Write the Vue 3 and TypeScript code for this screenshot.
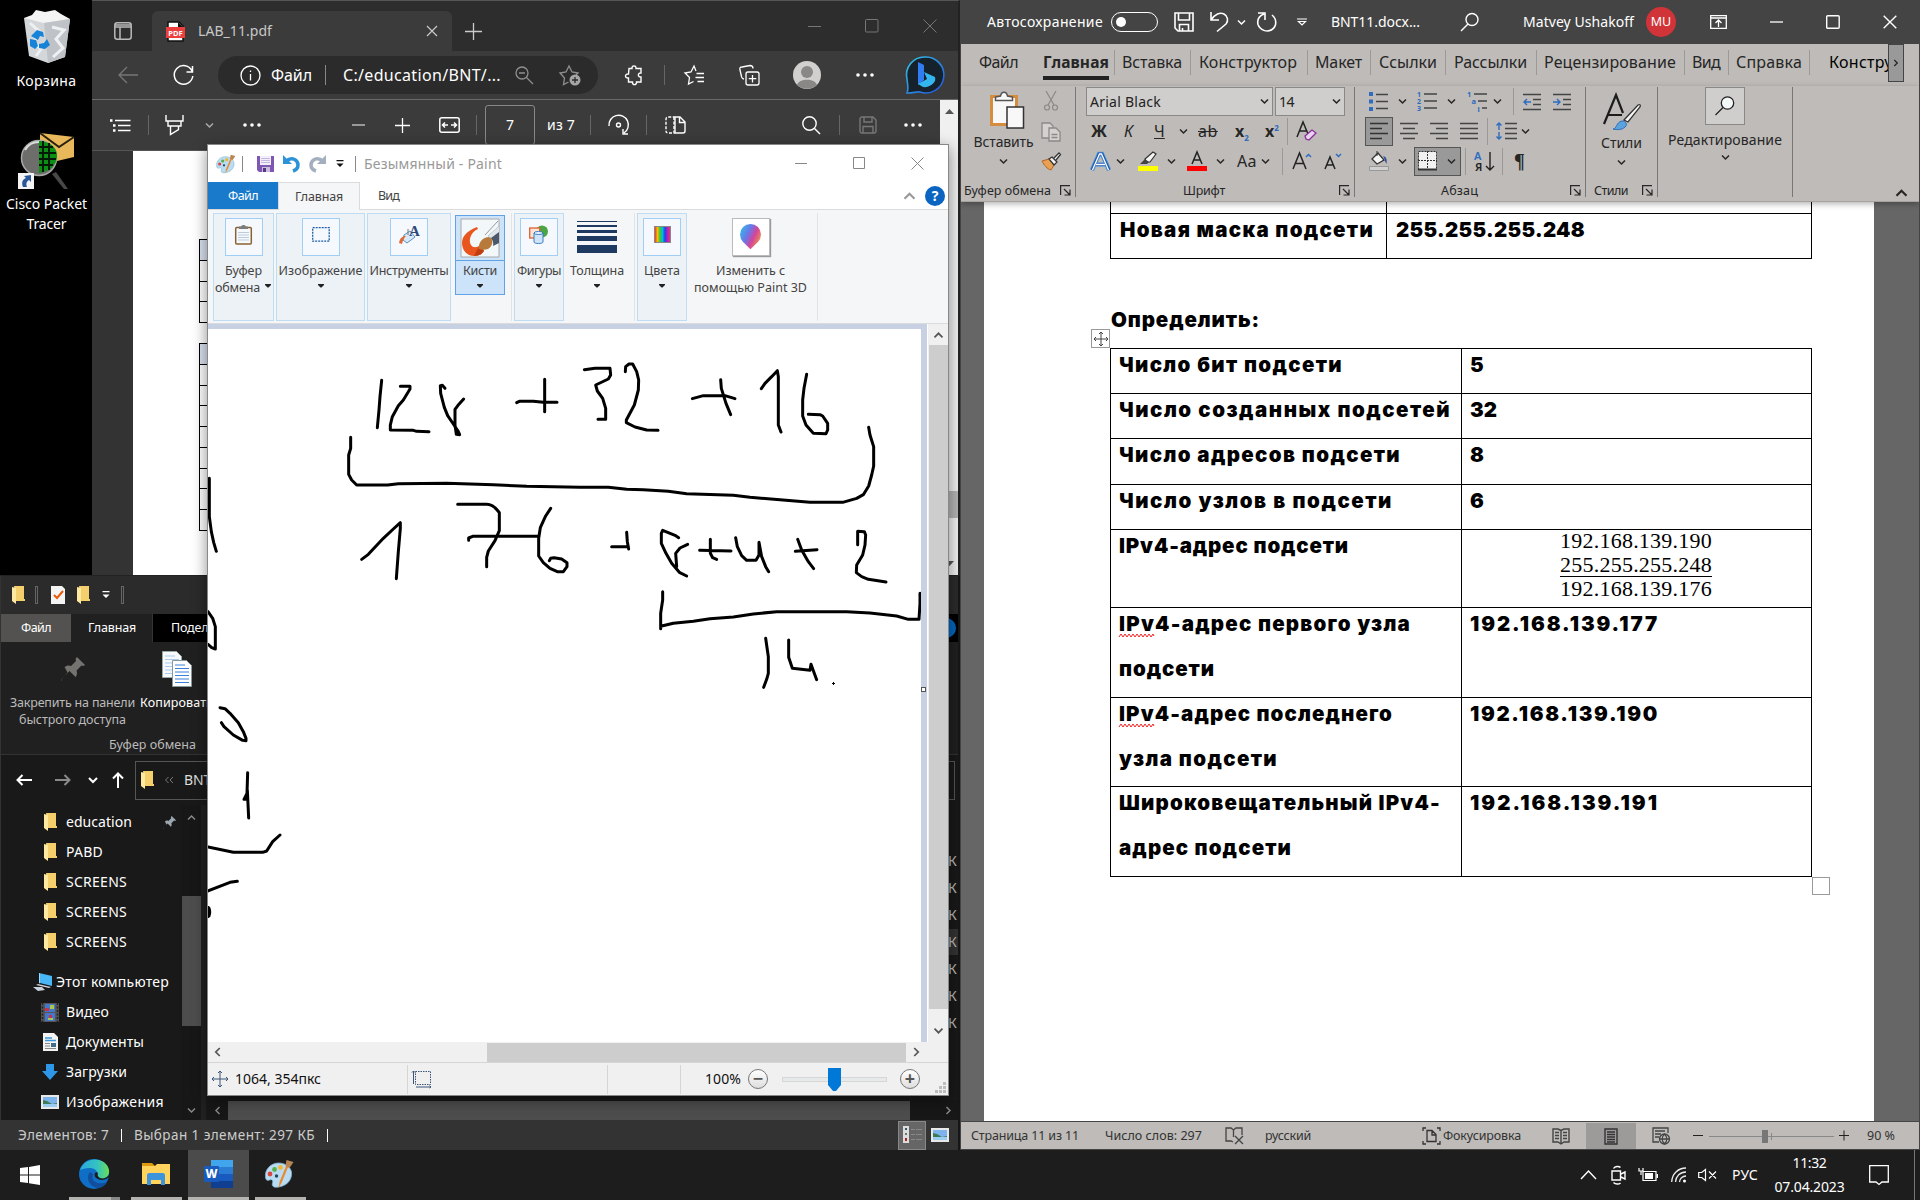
<script setup lang="ts">
import { h, type Directive, type FunctionalComponent } from 'vue'

// Spreads a label over a fixed pixel width by adjusting its letter spacing.
const vFit: Directive<HTMLElement, number> = {
  mounted(el, { value }) {
    const natural = el.getBoundingClientRect().width
    const count = (el.textContent ?? '').length
    if (count > 0) el.style.letterSpacing = `${(value - natural) / count}px`
  },
}

const stroke = { fill: 'none', stroke: 'currentColor' }
const Chev: FunctionalComponent = () =>
  h('svg', { width: 9, height: 7, viewBox: '0 0 9 7', ...stroke, 'stroke-width': 1.5 }, [h('path', { d: 'M1 1.5 4.5 5 8 1.5' })])
const Launcher: FunctionalComponent = () =>
  h('svg', { width: 11, height: 11, viewBox: '0 0 11 11', ...stroke, 'stroke-width': 1.2 }, [
    h('path', { d: 'M.6 10V.6H10M4 4l5.5 5.5M10 4.5V10H4.5' }),
  ])
const Caret: FunctionalComponent = () =>
  h('svg', { width: 8, height: 4, viewBox: '0 0 8 4', fill: 'currentColor' }, [h('path', { d: 'M1 0h6v1L4.5 3.5h-1L1 1z' })])
const QatArrow: FunctionalComponent = () =>
  h('svg', { width: 8, height: 8, viewBox: '0 0 8 8', fill: 'currentColor' }, [h('path', { d: 'M.5 0h7v1.3h-7zM.5 3.5h7L4 7z' })])
const Folder: FunctionalComponent = () =>
  h('svg', { width: 13, height: 18, viewBox: '0 0 13 18' }, [
    h('path', { fill: '#f5cf6c', d: 'M2 0h10v13h1v2H4z' }),
    h('path', { fill: '#ffe9a2', d: 'M0 1l4 1v16l-4-3z' }),
  ])
const Dots: FunctionalComponent = () =>
  h('svg', { width: 18, height: 4, viewBox: '0 0 18 4', fill: 'currentColor' }, [2, 9, 16].map((cx) => h('circle', { cx, cy: 2, r: 1.8 })))
const Pin: FunctionalComponent = () =>
  h('svg', { viewBox: '0 0 24 24', fill: 'currentColor' }, [
    h('path', { d: 'M16 0l8 8-1.5 1-2-.5-5 5c1 2.500.5 5-1 6.500L8.500 14 1.500 21 0 24l-.0-1L6.500 15.500 3.500 10c2-1.500 4-2 6.500-1l5-5-.5-2z' }),
  ])
const Photo: FunctionalComponent = () =>
  h('svg', { width: 18, height: 14, viewBox: '0 0 18 14' }, [
    h('rect', { width: 18, height: 14, fill: '#e8e8e8' }),
    h('rect', { x: 2, y: 2, width: 14, height: 10, fill: '#7db4ee' }),
    h('path', { d: 'M2 5l4 1 5 3 5-1v1H2z', fill: '#3f7a58' }),
    h('path', { d: 'M2 9h14v3H2z', fill: '#9ccdf0' }),
  ])
const Palette: FunctionalComponent = () =>
  h('svg', { viewBox: '0 0 30 30' }, [
    h('path', { d: 'M14 4C6 4 0 11 1 18c0 3 2 4 4 3s4 0 3 3 1 5 6 4c8-1 14-7 13-15C26 8 21 4 14 4z', fill: '#b9dcf2', stroke: '#7fb0cf', 'stroke-width': 0.8 }),
    h('circle', { cx: 5.5, cy: 15, r: 2.4, fill: '#d9473e' }),
    h('circle', { cx: 10, cy: 10.5, r: 2.4, fill: '#58b04c' }),
    h('circle', { cx: 16, cy: 8.5, r: 2.4, fill: '#f2b733' }),
    h('circle', { cx: 12, cy: 17, r: 1.7, fill: '#24465c' }),
    h('path', { d: 'M24 7L17 24l-3 5 1-6 7-17z', fill: '#e88a2f' }),
    h('path', { d: 'M22 1l7 2-4 6-4-2z', fill: '#b98553' }),
  ])

interface WordTab { text: string; cell: number; pad: number; fit: number; cls?: string }
const wordTabs: WordTab[] = [
  { text: 'Файл', cell: 64, pad: 0, fit: 39, cls: 'plain' },
  { text: 'Главная', cell: 71, pad: 0, fit: 66, cls: 'plain active' },
  { text: 'Вставка', cell: 76, pad: 7, fit: 60 },
  { text: 'Конструктор', cell: 117, pad: 8, fit: 98 },
  { text: 'Макет', cell: 63, pad: 7, fit: 47 },
  { text: 'Ссылки', cell: 75, pad: 8, fit: 58 },
  { text: 'Рассылки', cell: 91, pad: 8, fit: 73 },
  { text: 'Рецензирование', cell: 148, pad: 7, fit: 132 },
  { text: 'Вид', cell: 44, pad: 7, fit: 28 },
  { text: 'Справка', cell: 81, pad: 7, fit: 66 },
  { text: 'Конструктор', cell: 79, pad: 19, fit: 100, cls: 'last' },
]

interface Line { text: string; fit: number; wavy?: boolean }
interface DocRow { height: number; left: Line[]; right?: Line }
const docRows: DocRow[] = [
  { height: 45, left: [{ text: 'Число бит подсети', fit: 224 }], right: { text: '5', fit: 13 } },
  { height: 45, left: [{ text: 'Число созданных подсетей', fit: 332 }], right: { text: '32', fit: 27 } },
  { height: 46, left: [{ text: 'Число адресов подсети', fit: 282 }], right: { text: '8', fit: 13 } },
  { height: 45, left: [{ text: 'Число узлов в подсети', fit: 274 }], right: { text: '6', fit: 13 } },
  { height: 78, left: [{ text: 'IPv4-адрес подсети', fit: 230 }] },
  { height: 90, left: [{ text: 'IPv4-адрес первого узла', fit: 292, wavy: true }, { text: 'подсети', fit: 96 }], right: { text: '192.168.139.177', fit: 189 } },
  { height: 89, left: [{ text: 'IPv4-адрес последнего', fit: 274, wavy: true }, { text: 'узла подсети', fit: 159 }], right: { text: '192.168.139.190', fit: 189 } },
  { height: 90, left: [{ text: 'Широковещательный IPv4-', fit: 322 }, { text: 'адрес подсети', fit: 173 }], right: { text: '192.168.139.191', fit: 189 } },
]

const quickAccess = [
  { text: 'education', fit: 66, pinned: true },
  { text: 'PABD', fit: 37 },
  { text: 'SCREENS', fit: 61 },
  { text: 'SCREENS', fit: 61 },
  { text: 'SCREENS', fit: 61 },
]

// Pen strokes, grouped by the corner they are measured from, in thirds of a pixel.
const ink = [
  {
    x: 200, y: 320,
    strokes: [
      'M545 181 540 230 537 270 532 323',
      'M601 199H630V207L610 240 595 257 577 290 571 315V330L640 331 650 334 687 335',
      'M735 205 727 196 721 197 722 220 733 262 743 287 760 312 775 335 779 344 769 343 765 315V268L774 256 791 237',
      'M950 248 958 244H1000L1030 247H1071M1034 178V275',
      'M452 352V385L446 405V463L455 480 470 495H563L595 491 740 490 880 494 980 499 1140 502 1225 502 1280 508 1330 509 1405 514 1460 521 1600 526 1650 532 1740 539 1830 547H1928L1970 535 1990 524 2006 498 2015 465 2021 438V380L2010 345 2006 322',
      'M485 718 505 703 550 655 580 627 601 608V625L595 695 589 776',
      'M773 553H860Q880 553 898 578V632L885 662 865 693 860 712V740M806 661V654L818 649H1016',
      'M1052 565 1037 588 1021 623 1016 655V708L1030 728 1050 745 1072 755H1090L1101 740V728L1085 717 1062 713 1052 715 1048 722',
      'M28 475V590L34 635 41 667 49 694',
      'M24 875 38 895 46 920V987L35 983 24 973',
    ],
  },
  {
    x: 580, y: 320,
    strokes: [
      'M13 149 45 145H90L92 165 85 177 47 195 52 213 68 235 77 265V298H54',
      'M136 155 137 140 147 132H158L170 155 176 180 175 210 163 255 139 300V308L165 321 200 330 234 331',
      'M337 236 370 227H435L465 236M422 179 424 205 438 250 452 284',
      'M544 206 555 190 575 170 592 152 595 170V315L603 336',
      'M680 163 672 205 668 240V288L678 315 700 340 738 341 743 330V310L728 288 720 284 685 283',
      'M95 680H145M140 637 142 665 146 687',
      'M296 653 285 646 248 631 244 640V670L258 700 275 730 298 757 320 768M290 740 287 700 300 684 323 673',
      'M359 691 453 693M391 658V700L398 713 410 718',
      'M467 653 472 680 485 707 500 721H528L537 705V667L545 710 557 740 566 755',
      'M646 694 711 689M653 658 665 690 685 725 701 746',
      'M833 674V634L853 635 857 645 855 675 848 705 830 735 829 758 845 770 865 778 918 786',
      'M248 815V840L242 880V926M242 919 280 910 340 904 390 896 460 891 520 882 590 875H800L870 879 950 888 985 898H1017L1020 850V820',
      'M557 955 565 1010V1060L560 1078 551 1102M626 960V1012L637 1045 690 1051 693 1033 710 1079',
    ],
  },
  {
    x: 0, y: 560,
    strokes: [
      'M660 443 675 446 690 460 715 488 730 515 738 535V542L728 541 700 525 672 500 664 488',
      'M743 638 741 700 732 718H741M742 690 746 774',
      'M624 861 700 877H788L800 873 818 845 840 825',
      'M620 994 690 967 712 964',
    ],
  },
]
const sheetLines = [239, 260, 281, 301, 322, 343, 364, 385, 405, 426, 447, 468, 488, 509, 530]
</script>

<template>
  <div class="desktop">
    <!-- Desktop shortcuts -->
    <div class="shortcuts">
      <div class="shortcut">
        <svg width="50" height="56" viewBox="0 0 50 56">
          <path d="M2 9l46 1-5 38-17 6-19-7z" fill="#d4d7da" />
          <path d="M2 9l20 5 26-4-9-5-6-4-10 2-9-2-4 5z" fill="#f4f4f4" />
          <path d="M22 14l26-4-5 38-17 6z" fill="#bfc3c7" />
          <path d="M30 18l12 3-8 9 7 9-10 9M8 14l10 9-7 10 8 7-5 7" stroke="#eef0f2" stroke-width="3" fill="none" />
          <path d="M9 27l6-6 6 2 1 5-4-1-2 4zM8 30l6 1 2 6-3 3-5-3zM17 35l5-1 3-4 3 6-5 4-6-1z" fill="#1683d8" />
        </svg>
        <span v-fit="60" class="sc-label bin">Корзина</span>
      </div>
      <div class="shortcut second">
        <svg width="58" height="60" viewBox="0 0 58 60">
          <path d="M22 1l34 4v20l-34 8z" fill="#e8b85a" />
          <path d="M22 1l19 14L56 5" stroke="#2a2110" stroke-width="2" fill="none" />
          <circle cx="21" cy="26" r="17.500" fill="#6d6d6b" stroke="#a7a7a5" stroke-width="1.500" />
          <path d="M21 9c12 0 19 8 18 16s-6 14-18 16z" fill="#0b8f14" />
          <path d="M25 9v31M31 11v27M21 15h14M21 21h17M21 27h17M21 33h14" stroke="#031b05" stroke-width="2" />
          <path d="M7 18c4-7 10-8 14-8" stroke="#ddd" stroke-width="2" fill="none" />
          <path d="M34 42l4-2 12 17h-4z" fill="#484848" />
          <rect x="0" y="41" width="16" height="16" fill="#f4f4f4" />
          <path d="M5 55c-2-5 0-8 3-9l-2-2 7-1v7l-2-2c-3 2-3 4-2 7z" fill="#2b579a" />
        </svg>
        <span v-fit="81" class="sc-label first">Cisco Packet</span>
        <span v-fit="40" class="sc-label">Tracer</span>
      </div>
    </div>

    <!-- Browser -->
    <section class="edge">
      <header class="row e-tabs">
        <svg width="18" height="18" viewBox="0 0 18 18" fill="none" stroke="#b9b9b9" stroke-width="1.500"><rect x=".8" y=".8" width="16.400" height="16.400" rx="2.500" /><path d="M1 3h16M1 5h16M6 5v12" /></svg>
        <div class="row e-tab">
          <svg width="19" height="21" viewBox="0 0 19 21"><path d="M2 1h11l4 4v15H2z" fill="#fff" stroke="#111" stroke-width="1.500" /><path d="M12 1l5 5h-5z" fill="#111" /><rect y="6" width="19" height="11" fill="#ee3f3f" /><text x="9.500" y="14.500" font-size="7.500" font-weight="700" fill="#fff" text-anchor="middle">PDF</text></svg>
          <span v-fit="74">LAB_11.pdf</span>
          <svg width="12" height="12" viewBox="0 0 12 12" fill="none" stroke="#c9c9c9" stroke-width="1.200"><path d="M1 1l10 10M11 1L1 11" /></svg>
        </div>
        <svg class="newtab" width="17" height="17" viewBox="0 0 17 17" fill="none" stroke="#ccc" stroke-width="1.300"><path d="M8.500 0v17M0 8.500h17" /></svg>
        <svg width="14" height="14" viewBox="0 0 14 14" fill="none" stroke="#777"><path d="M0 7.500h13" /></svg>
        <svg width="14" height="14" viewBox="0 0 14 14" fill="none" stroke="#777"><rect x=".5" y=".5" width="12.500" height="12.500" rx="1" /></svg>
        <svg width="14" height="14" viewBox="0 0 14 14" fill="none" stroke="#777"><path d="M.5.5l13 13M13.500.5l-13 13" /></svg>
      </header>
      <div class="row e-addr">
        <svg width="20" height="18" viewBox="0 0 20 18" fill="none" stroke="#777" stroke-width="1.300"><path d="M20 9H1M9 1L1 9l8 8" /></svg>
        <svg width="21" height="21" viewBox="0 0 21 21" fill="none" stroke="#fff" stroke-width="1.500"><path d="M19 6A9.300 9.300 0 1 0 19.800 11M19.500 1v6h-6" /></svg>
        <div class="row e-pill">
          <svg width="21" height="21" viewBox="0 0 21 21" fill="none" stroke="#fff" stroke-width="1.300"><circle cx="10.500" cy="10.500" r="9.500" /><path d="M10.500 9v6.500M10.500 5.500v1.500" /></svg>
          <span v-fit="41">Файл</span>
          <i class="bar" />
          <span v-fit="158">C:/education/BNT/...</span>
          <svg width="19" height="19" viewBox="0 0 19 19" fill="none" stroke="#8f8f8f" stroke-width="1.300"><circle cx="7" cy="7" r="6" /><path d="M11.500 11.500L18 18M4 7h6" /></svg>
          <svg width="22" height="22" viewBox="0 0 22 22" fill="none" stroke="#8f8f8f" stroke-width="1.300"><path d="M9.500 18l-5 2.500 1-6.500L1 9l6-1 3-6 3 6 6 1-2 2" /><circle cx="16" cy="16" r="5.500" fill="#a5a5a5" stroke="none" /><path d="M16 13v6M13 16h6" stroke="#2b2b2b" /></svg>
        </div>
        <svg width="20" height="21" viewBox="0 0 20 21" fill="none" stroke="#fff" stroke-width="1.400"><path d="M5 3.500h3c-.5-3.500 4.500-3.500 4 0h5v4.500c-3.500-.5-3.500 4.500 0 4v5h-4.500c.5 3.500-4.500 3.500-4 0H4.500V13c-4 .5-4-4.500 0-4z" /></svg>
        <i class="bar dim" />
        <svg width="21" height="20" viewBox="0 0 21 20" fill="none" stroke="#fff" stroke-width="1.300"><path d="M12 6l-2-5-3 6-6 1 4.500 4.500L4.500 19l5-2.500M12.500 8.500H20M11.500 12.500H20M13.500 16.500H20" /></svg>
        <svg width="21" height="21" viewBox="0 0 21 21" fill="none" stroke="#fff" stroke-width="1.300"><path d="M5 14c-2 0-2-1-2.500-2.500L1 5c-.5-2 0-3 2-3l8-1.500c2 0 3 1 3 3M14 7H9C7.500 7 7 8 7 9v9c0 1.500 1 2 2 2h9c1.500 0 2-1 2-2V9c0-1.500-1-2-2-2zM13.500 10v7.500M9.800 13.700h7.500" /></svg>
        <svg width="28" height="28" viewBox="0 0 28 28"><circle cx="14" cy="14" r="14" fill="#d2d0ce" /><circle cx="14" cy="11" r="6" fill="#8a8886" /><path d="M4 24c2-7 18-7 20 0-5 5-15 5-20 0z" fill="#8a8886" /></svg>
        <Dots />
        <svg width="38" height="38" viewBox="0 0 38 38"><defs><linearGradient id="bing" x1="0" y1="0" x2="1" y2="1"><stop offset="0" stop-color="#34c6e8" /><stop offset="1" stop-color="#2450d8" /></linearGradient></defs><path d="M19 1a18 18 0 1 1-5 35c-3-.8-8 1.500-13 1 2-4 .5-8 0-14A18 18 0 0 1 19 1z" fill="#15212b" stroke="url(#bing)" stroke-width="1.600" /><path d="M12 6l6 3v15l-6 5z" fill="#2f7df0" /><path d="M12 28l9-5-3-7 11 5c2 6-6 11-12 10z" fill="#35b5f0" /></svg>
      </div>
      <div class="e-pdf">
        <div class="e-pdf-main">
          <div class="row e-tools">
            <svg width="21" height="15" viewBox="0 0 21 15" fill="none" stroke="#fff" stroke-width="1.300"><path d="M5 2.500h15.500M8 7.500h12.500M8 12.500h12.500" /><path d="M0 2.500h2.500M3 7.500h2.500M3 12.500h2.500" stroke-width="2.500" /></svg>
            <i class="bar dim" />
            <svg width="19" height="21" viewBox="0 0 19 21" fill="none" stroke="#fff" stroke-width="1.400"><path d="M1 0v6h17V0M3 6v5h13V6M5.500 11v8.500l8-5V11" /></svg>
            <Chev class="grey" />
            <Dots />
            <svg width="13" height="14" viewBox="0 0 13 14" stroke="#ccc" stroke-width="1.300"><path d="M0 7h13" /></svg>
            <svg width="15" height="15" viewBox="0 0 15 15" stroke="#fff" stroke-width="1.300"><path d="M0 7.500h15M7.500 0v15" /></svg>
            <svg width="21" height="16" viewBox="0 0 21 16" fill="none" stroke="#fff" stroke-width="1.500"><rect x=".8" y=".8" width="19.400" height="14.400" rx="2" /><path d="M9 8H4M6 5.500L3.500 8 6 10.500M12 8h5M15 5.500L17.500 8 15 10.500" /></svg>
            <i class="bar dim" />
            <div class="pagebox">7</div>
            <span v-fit="28">из 7</span>
            <i class="bar dim" />
            <svg width="22" height="22" viewBox="0 0 22 22" fill="none" stroke="#fff" stroke-width="1.400"><path d="M1 12A9.700 9.700 0 1 1 16 19M20 20h-5v-5" /><circle cx="10.500" cy="11" r="2" /></svg>
            <i class="bar dim" />
            <svg width="21" height="18" viewBox="0 0 21 18" fill="none" stroke="#fff" stroke-width="1.400"><path d="M9 1v16H3c-1.500 0-2-1-2-2V3c0-1.500 1-2 2-2z" stroke-dasharray="3 1.500" /><path d="M10 1h5l5 5v9c0 1.500-1 2-2 2h-8zM14.500 1v5.500H20" /></svg>
            <svg width="19" height="19" viewBox="0 0 19 19" fill="none" stroke="#fff" stroke-width="1.400"><circle cx="7.500" cy="7.500" r="6.700" /><path d="M12.500 12.500L18 18" /></svg>
            <i class="bar dim" />
            <svg width="18" height="18" viewBox="0 0 18 18" fill="none" stroke="#777" stroke-width="1.400"><path d="M1 3c0-1.500 1-2 2-2h11l3 3v11c0 1.500-1 2-2 2H3c-1.500 0-2-1-2-2zM5 1v5h8V1M4 17v-6.500h10V17" /></svg>
            <Dots />
          </div>
          <div class="e-view">
            <div class="e-page">
              <svg width="90" height="424" viewBox="133 151 90 424">
                <path d="M199 239h24v21h-24zM199 343h24v21h-24z" fill="#dae3f1" />
                <path v-for="y in sheetLines" :key="y" :d="`M199 ${y + 0.5}H223`" stroke="#000" />
                <path d="M199.500 239v84M199.500 343v188" stroke="#000" />
              </svg>
            </div>
          </div>
        </div>
        <div class="e-scroll">
          <svg width="9" height="5" viewBox="0 0 9 5"><path d="M0 5l4.500-5L9 5z" fill="#555" /></svg>
          <i class="e-thumb" />
          <svg width="9" height="5" viewBox="0 0 9 5"><path d="M0 0l4.500 5L9 0z" fill="#555" /></svg>
        </div>
      </div>
    </section>

    <!-- File explorer -->
    <section class="explorer">
      <header class="row x-qat">
        <Folder /><i class="x-bar" />
        <svg width="15" height="18" viewBox="0 0 15 18"><path d="M0 0h11l3 3v15H0z" fill="#f4f4f4" /><path d="M3 9l3 3 6-7" fill="none" stroke="#e8590c" stroke-width="2" /></svg>
        <Folder /><QatArrow /><i class="x-bar" />
      </header>
      <nav class="x-tabs">
        <div class="x-file"><span v-fit="30">Файл</span></div>
        <div class="x-home"><span v-fit="48">Главная</span></div>
        <div class="x-rest"><span v-fit="70">Поделиться</span><i class="x-help" /></div>
      </nav>
      <div class="x-ribbon">
        <div class="x-cmds">
          <div class="x-pin"><Pin class="pin-big" /><span v-fit="125">Закрепить на панели</span><span v-fit="107">быстрого доступа</span></div>
          <div class="x-copy">
            <svg width="30" height="36" viewBox="0 0 30 36"><path d="M.5.500h14l5 5v21H.5z" fill="#f7f9fb" stroke="#9aa" /><path d="M3 5h10M3 8.500h14M3 12h14M3 15.500h14M3 19h14M3 22.500h14" stroke="#a9cbf0" /><path d="M10.500 9.500h14l5 5v21h-19z" fill="#fff" stroke="#899" /><path d="M13 14h10M13 17.500h14M13 21h14M13 24.500h14M13 28h14M13 31.500h14" stroke="#3a82d8" /></svg>
            <span v-fit="73">Копировать</span>
          </div>
        </div>
        <span v-fit="87" class="x-group">Буфер обмена</span>
      </div>
      <div class="row x-nav">
        <svg width="16" height="12" viewBox="0 0 16 12" fill="none" stroke="#fff" stroke-width="2"><path d="M16 6H1.500M6.500 1l-5 5 5 5" /></svg>
        <svg width="16" height="12" viewBox="0 0 16 12" fill="none" stroke="#8a8a8a" stroke-width="2"><path d="M0 6h14.500M9.500 1l5 5-5 5" /></svg>
        <svg width="10" height="7" viewBox="0 0 10 7" fill="none" stroke="#fff" stroke-width="2"><path d="M1 1l4 4 4-4" /></svg>
        <svg width="12" height="16" viewBox="0 0 12 16" fill="none" stroke="#fff" stroke-width="2"><path d="M6 16V1.500M1 6.500l5-5 5 5" /></svg>
        <div class="row x-path"><Folder /><svg width="9" height="6" viewBox="0 0 9 6" fill="none" stroke="#777"><path d="M3.500 0l-3 3 3 3M8 0L5 3l3 3" /></svg><span v-fit="27">BNT</span></div>
      </div>
      <div class="x-body">
        <aside class="x-tree">
          <div v-for="(f, i) in quickAccess" :key="i" class="row x-item"><Folder /><span v-fit="f.fit">{{ f.text }}</span><Pin v-if="f.pinned" class="pin-small" /></div>
          <div class="row x-item pc"><svg width="19" height="18" viewBox="0 0 19 18"><path d="M6 0l13 3v10L7 10z" fill="#49b6f5" /><path d="M6 0v10l1 .5V.5z" fill="#9adcff" /><path d="M5 11l13 3-2 1-13-3zM0 14l9 0 3 3-7 1z" fill="#c9d2da" /></svg><span v-fit="113">Этот компьютер</span></div>
          <div class="row x-item"><svg width="18" height="19" viewBox="0 0 18 19"><path d="M0 0h18v19H0z" fill="#555" /><path d="M1.500 0v19M16.500 0v19" stroke="#222" stroke-width="1.500" stroke-dasharray="2 1.500" /><path d="M4 1h10v8H4zM4 10h10v8H4z" fill="#4478cc" /><path d="M4 5h4v3H4zM8 12h3v3H8z" fill="#c8304c" /><path d="M9 2h4v4H9zM7 15h5v2H7z" fill="#a9c84c" /></svg><span v-fit="43">Видео</span></div>
          <div class="row x-item"><svg width="15" height="18" viewBox="0 0 15 18"><path d="M0 0h11l4 4v14H0z" fill="#f4f4f4" /><path d="M2 5h7M2 7.500h11" stroke="#3b97d8" stroke-width="1.300" /><path d="M2 10.500h5M2 13h5M2 15.500h11" stroke="#888" /><path d="M8 10h5v4H8z" fill="#3f6f86" /></svg><span v-fit="78">Документы</span></div>
          <div class="row x-item"><svg width="16" height="16" viewBox="0 0 16 16"><path d="M4 0h8v7h4l-8 9-8-9h4z" fill="#2f97e8" /></svg><span v-fit="61">Загрузки</span></div>
          <div class="row x-item"><Photo /><span v-fit="98">Изображения</span></div>
        </aside>
        <div class="x-vscroll"><Chev class="up" /><i /><Chev /></div>
        <div class="x-files">
          <div class="x-sizes"><span v-for="n in 7" :key="n" :class="{ sel: n === 4 }">К</span></div>
          <div class="row x-hscroll"><Chev class="left" /><i /><Chev class="right" /></div>
        </div>
      </div>
      <footer class="row x-status">
        <span v-fit="91">Элементов: 7</span><i /><span v-fit="181">Выбран 1 элемент: 297 КБ</span><i />
        <div class="x-view"><svg width="20" height="18" viewBox="0 0 20 18"><path d="M1 0h6v17H1z" fill="#ddd" /><path d="M3 2h2v2H3z" fill="#356" /><path d="M3 7h2v2H3z" fill="#676" /><path d="M3 12h2v3H3z" fill="#a22" /><path d="M9 3.500h4M14 3.500h6M9 8.500h4M14 8.500h6M9 13.500h4M14 13.500h6" stroke="#888" /></svg></div>
        <Photo />
      </footer>
    </section>

    <!-- Paint -->
    <section class="paint">
      <header class="row p-title">
        <Palette class="pal-small" /><i class="bar" />
        <svg width="17" height="16" viewBox="0 0 17 16"><path d="M0 0h17v16H2l-2-2z" fill="#7d57b2" /><path d="M3 0h11v9H3z" fill="#f3effa" /><path d="M4 2.500h9M4 4.500h9M4 6.500h9" stroke="#c6b7df" /><path d="M5 11h8v5H5z" fill="#c9bcdd" /><path d="M6 12h3v4H6z" fill="#553687" /></svg>
        <svg width="17" height="18" viewBox="0 0 17 18" fill="none" stroke="#2b93d6" stroke-width="3.500"><path d="M3 6c6-5 12-1 12 4 0 3-2 5-5 6" /><path d="M0 0v9h9z" fill="#2b93d6" stroke="none" /></svg>
        <svg width="17" height="18" viewBox="0 0 17 18" fill="none" stroke="#a3afbf" stroke-width="3.500"><path d="M14 6C8 1 2 5 2 10c0 3 2 5 5 6" /><path d="M17 0v9H8z" fill="#a3afbf" stroke="none" /></svg>
        <QatArrow class="dark" /><i class="bar" />
        <span v-fit="138">Безымянный - Paint</span>
        <svg width="13" height="13" viewBox="0 0 13 13" stroke="#888"><path d="M0 6.500h12" /></svg>
        <svg width="13" height="13" viewBox="0 0 13 13" fill="none" stroke="#888"><path d="M.5.500h11v11H.5z" /></svg>
        <svg width="13" height="13" viewBox="0 0 13 13" fill="none" stroke="#888"><path d="M.5.500l12 12M12.500.500l-12 12" /></svg>
      </header>
      <nav class="p-tabs">
        <div class="p-file"><span v-fit="30">Файл</span></div>
        <div class="p-home"><span v-fit="48">Главная</span></div>
        <div class="row p-rest"><span v-fit="21">Вид</span><Chev class="up wide" /><b>?</b></div>
      </nav>
      <div class="p-ribbon">
        <div class="p-group boxed g1">
          <div class="p-box"><svg width="17" height="20" viewBox="0 0 17 20"><rect x=".7" y="2.500" width="15.600" height="16.500" rx="1" fill="#f6f9fd" stroke="#8b6232" stroke-width="1.500" /><path d="M4 1.500h2c1-2 4-2 5 0h2V4H4z" fill="#7c7c7c" /><path d="M3 7.500h11M3 10h11M3 12.500h11M3 15h11" stroke="#bcd" /></svg></div>
          <span v-fit="37">Буфер</span><span class="inl"><span v-fit="45">обмена</span><Caret /></span>
        </div>
        <div class="p-group boxed g2"><div class="p-box"><svg width="18" height="15" viewBox="0 0 18 15"><rect x=".7" y=".7" width="16.500" height="13.500" fill="none" stroke="#1d5fa8" stroke-width="1.300" stroke-dasharray="2 1" /></svg></div><span v-fit="84">Изображение</span><Caret /></div>
        <div class="p-group boxed g3"><div class="p-box"><svg width="21" height="21" viewBox="0 0 21 21"><path d="M5 11l6-4 5 6-8 6-4-3z" fill="#d7e9f8" stroke="#5a8fc0" /><path d="M9 5v6" stroke="#777" /><path d="M0 19c1-5 3-7 7-7-2 2-3 4-4 8z" fill="#e06a36" /><text x="10" y="12" font-size="15" font-weight="700" fill="#2a4a78" class="serif">A</text></svg></div><span v-fit="79">Инструменты</span><Caret /></div>
        <div class="p-brush">
          <div class="p-brush-img"><svg width="38" height="38" viewBox="0 0 38 38"><path d="M0 0h38v38H0z" fill="#f2f7f9" stroke="#aaa" /><path d="M16 8C6 12 1 17 1 24c0 7 5 13 12 13 5 0 8-2 10-5l-4-6c-3 3-7 3-9 0-3-5 0-13 7-16z" fill="#e8551f" /><path d="M13 37c5 0 8-2 10-5l-3-5-4 4z" fill="#c03d10" /><path d="M18 30c-1-7 4-12 10-12 5 2 4 9-1 12-3 1-6 1-9 0z" fill="#b87a3a" /><path d="M27 17L38 7v17l-6 3c1-4-1-8-5-10z" fill="#4c586a" /><path d="M27 17L38 7v6l-8 6z" fill="#dfe6ec" /><path d="M24 16L37 2" stroke="#999" fill="none" /></svg></div>
          <span v-fit="34">Кисти</span><Caret />
        </div>
        <i class="p-sep" />
        <div class="p-group boxed g5"><div class="p-box"><svg width="20" height="20" viewBox="0 0 20 20"><circle cx="13" cy="6.500" r="6" fill="#4aa544" /><rect x=".7" y="3" width="10" height="10" fill="#fbe3d8" stroke="#e0602e" stroke-width="1.300" /><path d="M5 8v9c0 2 9 2 9 0V8z" fill="#cfe4f8" stroke="#3d7dbf" /><ellipse cx="9.500" cy="8" rx="4.500" ry="1.500" fill="#eef7ff" stroke="#3d7dbf" /></svg></div><span v-fit="44">Фигуры</span><Caret /></div>
        <div class="p-group g6"><svg width="40" height="33" viewBox="0 0 40 33"><path d="M0 1h40v1H0zM0 5h40v2H0zM0 10h40v3H0zM0 16h40v5H0zM0 25h40v8H0z" fill="#1f3a60" /></svg><span v-fit="54">Толщина</span><Caret /></div>
        <i class="p-sep" />
        <div class="p-group boxed g7"><div class="p-box"><i class="rainbow" /></div><span v-fit="36">Цвета</span><Caret /></div>
        <div class="p-group g8"><div class="p-box p3d"><i class="drop" /></div><span v-fit="69">Изменить с</span><span v-fit="113">помощью Paint 3D</span></div>
        <i class="p-sep" />
      </div>
      <div class="p-work">
        <div class="p-canvas-area">
          <div class="p-canvas">
            <svg width="713" height="713" viewBox="208 329 713 713">
              <g v-for="g in ink" :key="`${g.x}-${g.y}`" :transform="`translate(${g.x} ${g.y}) scale(.33333)`" class="ink">
                <path v-for="(d, i) in g.strokes" :key="i" :d="d" />
              </g>
              <ellipse cx="208.500" cy="912" rx="2.700" ry="6" />
              <path d="M832 683.500h3M833.500 682v3" stroke="#000" />
            </svg>
            <i class="p-handle" />
          </div>
        </div>
        <div class="p-vscroll"><Chev class="up" /><i /><Chev /></div>
      </div>
      <div class="row p-hscroll"><Chev class="left" /><i /><Chev class="right" /></div>
      <footer class="row p-status">
        <svg width="18" height="18" viewBox="0 0 18 18" fill="none" stroke="#3b5578"><path d="M9 1v16M1 9h16M7 3l2-2 2 2M7 15l2 2 2-2M3 7L1 9l2 2M15 7l2 2-2 2" /></svg>
        <span v-fit="86">1064, 354пкс</span><i class="v" />
        <svg width="20" height="18" viewBox="0 0 20 18" fill="none" stroke="#3b5578"><path d="M3.500 1.500h15v13h-15z" stroke-dasharray="1.500 1" /><path d="M1.500 1v13M0 2.500L1.500 1 3 2.500M4 17h15M17.500 15.500L19 17l-1.500 1" /></svg>
        <i class="v" /><i class="v" />
        <span v-fit="36">100%</span>
        <b class="rnd">−</b>
        <div class="p-slider"><svg width="13" height="23" viewBox="0 0 13 23"><path d="M0 0h13v17l-5 6H5l-5-6z" fill="#0078d7" /></svg></div>
        <b class="rnd">+</b>
        <svg class="grip" width="12" height="12" viewBox="0 0 12 12" fill="#bdbdbd"><path d="M8 0h3v3H8zM4 4h3v3H4zM8 4h3v3H8zM0 8h3v3H0zM4 8h3v3H4zM8 8h3v3H8z" /></svg>
      </footer>
    </section>

    <!-- Word -->
    <section class="word">
      <header class="row w-title">
        <span v-fit="116">Автосохранение</span>
        <div class="toggle"><i /></div>
        <svg width="20" height="20" viewBox="0 0 20 20" fill="none" stroke="#fff" stroke-width="1.600"><path d="M1 1h18v18H4l-3-3zM4.500 1v7h11V1M5.500 19v-6.500h9V19M8.500 19v-3" /></svg>
        <svg width="19" height="20" viewBox="0 0 19 20" fill="none" stroke="#fff" stroke-width="1.600"><path d="M1 0v8h8M1.500 7.500C5 2 10 0 14 2c4 2 4.500 7 2 10l-9 7.500" /></svg>
        <Chev />
        <svg width="20" height="20" viewBox="0 0 20 20" fill="none" stroke="#fff" stroke-width="1.600"><path d="M1 1h7v7M7 2C2 4 0 8 1 12.500 3 18 10 21 15 17.500S20 7 15 3" /></svg>
        <svg width="10" height="8" viewBox="0 0 10 8" fill="none" stroke="#fff" stroke-width="1.200"><path d="M0 1h10M1.500 3.500L5 7l3.500-3.500z" /></svg>
        <span v-fit="89">BNT11.docx...</span>
        <svg width="18" height="18" viewBox="0 0 18 18" fill="none" stroke="#fff" stroke-width="1.400"><circle cx="11" cy="6.500" r="6" /><path d="M7 11L0 18" /></svg>
        <span v-fit="111">Matvey Ushakoff</span>
        <b class="avatar">MU</b>
        <svg width="17" height="14" viewBox="0 0 17 14" fill="none" stroke="#fff" stroke-width="1.300"><path d="M.7.700h15.600v12.600H.7zM.7 3h15.600M8.500 12V5.500M5.500 8l3-3 3 3" /></svg>
        <svg width="13" height="14" viewBox="0 0 13 14" stroke="#fff" stroke-width="1.300"><path d="M0 7h13" /></svg>
        <svg width="14" height="14" viewBox="0 0 14 14" fill="none" stroke="#fff" stroke-width="1.400"><rect x=".7" y=".7" width="12.500" height="12.500" rx="1" /></svg>
        <svg width="14" height="14" viewBox="0 0 14 14" fill="none" stroke="#fff" stroke-width="1.400"><path d="M.7.700l12.600 12.600M13.300.700L.7 13.300" /></svg>
      </header>
      <nav class="w-tabs">
        <div v-for="(t, i) in wordTabs" :key="i" class="w-tab" :class="t.cls" :style="{ width: `${t.cell}px`, paddingLeft: `${t.pad}px` }"><span v-fit="t.fit">{{ t.text }}</span></div>
        <div class="w-more"><Chev class="right" /></div>
      </nav>
      <div class="w-ribbon">
        <div class="w-group clip">
          <div class="w-body">
            <div class="w-paste">
              <svg width="35" height="38" viewBox="0 0 35 38"><path d="M1.500 5.500h25v28h-25z" fill="#f8f8f8" stroke="#d68c3f" stroke-width="3" /><path d="M5.500 9.500V6l5-1c1-5 6-5 7 0l5 1v3.500z" fill="#f8f8f8" stroke="#555" stroke-width="1.500" /><path d="M17 16h16.500v21H17z" fill="#f8f8f8" stroke="#333" stroke-width="1.500" /></svg>
              <span v-fit="60">Вставить</span><Chev />
            </div>
            <div class="w-clipicons">
              <svg width="14" height="20" viewBox="0 0 14 20" fill="none" stroke="#8b8987" stroke-width="1.200"><path d="M2 0l8 14M12 0L4 14" /><circle cx="3" cy="16.500" r="2.500" /><circle cx="11" cy="16.500" r="2.500" /></svg>
              <svg width="20" height="20" viewBox="0 0 20 20" fill="#d4d2d0" stroke="#8b8987" stroke-width="1.300"><path d="M1 1h8l3 3v12H1z" /><path d="M8 6h7l4 4v9H8zM10.500 12.500h6M10.500 15.500h6" /></svg>
              <svg width="20" height="19" viewBox="0 0 20 19"><path d="M1 9l7-2 5 6-3 5C6 17 3 13 1 9z" fill="#e8a052" stroke="#b5651d" /><path d="M8 7l3-2 5 5-3 3zM13 6l5-5 1.500 1.500L15 8" fill="#f4f4f4" stroke="#333" stroke-width="1.300" /></svg>
            </div>
          </div>
          <div class="w-foot"><span v-fit="87">Буфер обмена</span><Launcher /></div>
        </div>
        <div class="w-group font">
          <div class="w-body col">
            <div class="w-combos"><div class="combo c1"><span v-fit="71">Arial Black</span><Chev /></div><div class="combo c2"><span v-fit="15">14</span><Chev /></div></div>
            <div class="row f2">
              <b class="gl">Ж</b><em class="gl">К</em><u class="gl">Ч</u><Chev /><s class="gl ab">ab</s><b class="gl">x<sub>2</sub></b><b class="gl">x<sup>2</sup></b><i class="sep" />
              <svg width="21" height="20" viewBox="0 0 21 20" fill="none" stroke="#222" stroke-width="1.500"><path d="M1 16L7 1l5 12M3 10h7.500" /><path d="M9 15l7-6 4 3-7 7-3-1z" fill="#e9d5f0" stroke="#8a2f9c" stroke-width="1.300" /></svg>
            </div>
            <div class="row f3">
              <svg width="21" height="19" viewBox="0 0 21 19" fill="none"><path d="M2 18l7-16h3l7 16M6 12.500h9" stroke="#5b9bd8" stroke-width="4.500" /><path d="M2 18l7-16h3l7 16M6 12.500h9" stroke="#1f5bb0" stroke-width="3" /><path d="M2.500 18l7-16h2l7 16M6 12.500h9" stroke="#fff" stroke-width="1.300" /></svg><Chev />
              <svg width="20" height="21" viewBox="0 0 20 21"><path d="M0 15h20v5H0z" fill="#ff0" /><path d="M7 8l8-7 3 2-6 8-4 0z" fill="#f5f5f5" stroke="#333" stroke-width="1.200" /><path d="M2 13l5-5 4 3-2 2z" fill="#444" /></svg><Chev />
              <svg width="20" height="21" viewBox="0 0 20 21"><path d="M0 15h20v5H0z" fill="#f00" /><path d="M5 13L10 1l5 12M6.500 9h7" fill="none" stroke="#222" stroke-width="1.500" /></svg><Chev />
              <span v-fit="20" class="gl thin">Aa</span><Chev /><i class="sep" />
              <svg width="20" height="18" viewBox="0 0 20 18" fill="none" stroke="#222" stroke-width="1.500"><path d="M1 17L7.500 1 14 17M3.500 11.500h8" /><path d="M14 5l2.500-2.500L19 5" stroke="#2d6cc0" /></svg>
              <svg width="18" height="18" viewBox="0 0 18 18" fill="none" stroke="#222" stroke-width="1.500"><path d="M1 17L6 5l5 12M3 13h6.500" /><path d="M12 2l2.500 2.500L17 2" stroke="#2d6cc0" /></svg>
            </div>
          </div>
          <div class="w-foot"><span v-fit="42">Шрифт</span><Launcher /></div>
        </div>
        <div class="w-group para">
          <div class="w-body col">
            <div class="row p1">
              <svg width="19" height="19" viewBox="0 0 19 19"><path d="M7 2.500h12M7 9.500h12M7 16.500h12" stroke="#444" stroke-width="1.400" /><path d="M0 0h4v4H0zM0 7.500h4v4H0zM0 15h4v4H0z" fill="#2d6cc0" /></svg><Chev />
              <svg width="20" height="21" viewBox="0 0 20 21"><path d="M7 3h13M7 10h13M7 17h13" stroke="#444" stroke-width="1.400" /><g fill="#2d6cc0" font-size="7" font-weight="700"><text y="6">1</text><text y="13.200">2</text><text y="20.400">3</text></g></svg><Chev />
              <svg width="20" height="21" viewBox="0 0 20 21"><path d="M7 3h13M11 10h9M15 17h5" stroke="#444" stroke-width="1.400" /><g fill="#2d6cc0" font-size="7.500" font-weight="700"><text y="5.500">1</text><text x="4.500" y="13">a</text><text x="10.500" y="20.500">i</text></g></svg><Chev />
              <i class="sep" />
              <svg width="18" height="18" viewBox="0 0 18 18" fill="none" stroke="#444" stroke-width="1.400"><path d="M0 1.500h18M10 6.500h8M10 11.500h8M0 16.500h18" /><path d="M8 9H1M4 6L1 9l3 3" stroke="#2d6cc0" /></svg>
              <svg width="18" height="18" viewBox="0 0 18 18" fill="none" stroke="#444" stroke-width="1.400"><path d="M0 1.500h18M10 6.500h8M10 11.500h8M0 16.500h18" /><path d="M0 9h7M4 6l3 3-3 3" stroke="#2d6cc0" /></svg>
            </div>
            <div class="row p2">
              <div class="sq"><svg width="18" height="18" viewBox="0 0 18 18" stroke="#333" stroke-width="1.400"><path d="M0 1.500h18M0 6.500h12M0 11.500h18M0 16.500h12" /></svg></div>
              <svg width="18" height="18" viewBox="0 0 18 18" stroke="#444" stroke-width="1.400"><path d="M0 1.500h18M3 6.500h12M0 11.500h18M3 16.500h12" /></svg>
              <svg width="18" height="18" viewBox="0 0 18 18" stroke="#444" stroke-width="1.400"><path d="M0 1.500h18M6 6.500h12M0 11.500h18M6 16.500h12" /></svg>
              <svg width="18" height="18" viewBox="0 0 18 18" stroke="#444" stroke-width="1.400"><path d="M0 1.500h18M0 6.500h18M0 11.500h18M0 16.500h18" /></svg>
              <i class="sep" />
              <svg width="21" height="18" viewBox="0 0 21 18" fill="none" stroke="#444" stroke-width="1.400"><path d="M9 1.500h12M9 6.500h12M9 11.500h12M9 16.500h12" /><path d="M3 8V1M.5 3.500L3 1l2.500 2.500M3 10v7M.5 14.500L3 17l2.500-2.500" stroke="#2d6cc0" /></svg><Chev />
            </div>
            <div class="row p3">
              <svg width="20" height="20" viewBox="0 0 20 20"><path d="M.5 15.500h19v4H.5z" fill="#d0d0d0" stroke="#999" /><path d="M3 8l6-6 6 7-7 4z" fill="#f5f5f5" stroke="#333" stroke-width="1.300" /><path d="M8 5V0" stroke="#333" /><path d="M14 5c4 1 4 4 3.500 8-2-3-1.500-5-3.500-8z" fill="#2d4f9c" /></svg><Chev />
              <div class="brd"><svg width="19" height="20" viewBox="0 0 19 20" fill="none" stroke="#333"><path d="M.5.500h18v18H.5z" fill="#f1f1f1" stroke-dasharray="2 1" /><path d="M9.500 0v19M0 9.500h19" stroke-dasharray="2 1" /><path d="M0 18.500h19" stroke-width="2" /></svg><Chev /></div>
              <i class="sep" />
              <svg width="20" height="21" viewBox="0 0 20 21"><g font-size="11" font-weight="600"><text x="0" y="9" fill="#2d6cc0">А</text><text x="1" y="20" fill="#222">Я</text></g><path d="M16 1v18M12 15l4 4 4-4" fill="none" stroke="#222" stroke-width="1.400" /></svg>
              <i class="sep" />
              <b class="pil">¶</b>
            </div>
          </div>
          <div class="w-foot"><span v-fit="37">Абзац</span><Launcher /></div>
        </div>
        <div class="w-group styles">
          <div class="w-body col mid">
            <svg width="38" height="36" viewBox="0 0 38 36" fill="none"><path d="M1 30L13 1l7 18M5 21h14" stroke="#1c1c1c" stroke-width="2.200" /><path d="M21 26L35 11c2-1 3 0 2 2L25 28z" fill="#f5f5f5" stroke="#333" stroke-width="1.300" /><path d="M10 35c4 0 3-7 9-8 4 0 6 4 3 6-3 3-8 3-12 2z" fill="#5ba3dc" stroke="#2d6cc0" /></svg>
            <span v-fit="41">Стили</span><Chev />
          </div>
          <div class="w-foot"><span v-fit="34">Стили</span><Launcher /></div>
        </div>
        <div class="w-group edit">
          <div class="w-body col mid">
            <div class="find"><svg width="20" height="20" viewBox="0 0 20 20" fill="none" stroke="#222" stroke-width="1.300"><circle cx="12.500" cy="7" r="6.200" fill="#f4f8f8" /><path d="M8 11.500L.5 19" /></svg></div>
            <span v-fit="114">Редактирование</span><Chev />
          </div>
        </div>
        <Chev class="up wide collapse" />
      </div>
      <div class="w-doc">
        <div class="w-page">
          <div class="t1"><div class="t1a"><span v-fit="254">Новая маска подсети</span></div><div class="t1b"><span v-fit="189">255.255.255.248</span></div></div>
          <p class="heading"><span v-fit="149">Определить:</span></p>
          <div class="t2">
            <div v-for="(r, i) in docRows" :key="i" class="t2-row" :style="{ height: `${r.height}px` }">
              <div class="t2-left">
                <div v-for="(l, j) in r.left" :key="j" class="ln"><span v-fit="l.fit">{{ l.text }}</span><svg v-if="l.wavy" class="wave" width="37" height="5" viewBox="0 0 37 5"><path d="M0 4l2-3 2 3 2-3 2 3 2-3 2 3 2-3 2 3 2-3 2 3 2-3 2 3 2-3 2 3 2-3 2 3 2-3 1 2" fill="none" stroke="#e22" /></svg></div>
              </div>
              <div class="t2-right">
                <div v-if="r.right" class="ln"><span v-fit="r.right.fit">{{ r.right.text }}</span></div>
                <div v-else class="math"><span v-fit="152">192.168.139.190</span><span v-fit="152" class="under">255.255.255.248</span><span v-fit="152">192.168.139.176</span></div>
              </div>
            </div>
            <div class="mover"><svg width="16" height="16" viewBox="0 0 16 16" fill="none" stroke="#444"><path d="M8 1v14M1 8h14M6 3l2-2 2 2M6 13l2 2 2-2M3 6L1 8l2 2M13 6l2 2-2 2" /></svg></div>
            <div class="sizer" />
          </div>
        </div>
      </div>
      <footer class="row w-status">
        <span v-fit="108">Страница 11 из 11</span><span v-fit="97">Число слов: 297</span>
        <svg width="19" height="18" viewBox="0 0 19 18" fill="none" stroke="#444" stroke-width="1.300"><path d="M8 15L6 14H1V1h5l2.500 2L11 1h6v7M8.500 3v7M10 9l8 8M18 9l-8 8" /></svg>
        <span v-fit="46">русский</span>
        <svg width="19" height="18" viewBox="0 0 19 18" fill="none" stroke="#333" stroke-width="1.300"><path d="M4 1H1v3M15 1h3v3M4 17H1v-3M15 17h3v-3M5 3.500h5l4 4v7H5zM10 3.500V8h4" /></svg>
        <span v-fit="78">Фокусировка</span>
        <svg width="18" height="17" viewBox="0 0 18 17" fill="none" stroke="#444" stroke-width="1.400"><path d="M9 2.500L6 1H1v13h5l3 2 3-2h5V1h-5zM9 2.500V16M3 4.500h4M3 7.500h4M3 10.500h4M11 4.500h4M11 7.500h4M11 10.500h4" /></svg>
        <div class="mode"><svg width="14" height="17" viewBox="0 0 14 17" fill="none" stroke="#333" stroke-width="1.400"><path d="M1 1h12v15H1zM3 4h8M3 6.500h8M3 9h8M3 11.500h8M3 14h8" /></svg></div>
        <svg width="18" height="18" viewBox="0 0 18 18" fill="none" stroke="#444" stroke-width="1.300"><path d="M7 15H1V1h15v5M3 4h10M3 7h6M3 10h4" /><circle cx="12.500" cy="12" r="5" /><path d="M7.500 12h10M12.500 7c-3 3-3 7 0 10 3-3 3-7 0-10" /></svg>
        <svg width="10" height="12" viewBox="0 0 10 12" stroke="#222"><path d="M0 5.500h10" /></svg>
        <div class="zoomer"><i /><b /></div>
        <svg width="10" height="12" viewBox="0 0 10 12" stroke="#222"><path d="M0 5.500h10M5 .5v10" /></svg>
        <span v-fit="28">90 %</span>
      </footer>
    </section>

    <!-- Taskbar -->
    <footer class="taskbar">
      <div class="tb start"><svg width="20" height="20" viewBox="0 0 20 20" fill="#fff"><path d="M0 3l8-1v7.500H0zM9 1.900L20 0v9.500H9zM0 10.500h8V18l-8-1zM9 10.500h11V20L9 18.200z" /></svg></div>
      <div class="tb t-edge"><svg width="30" height="30" viewBox="0 0 30 30"><defs><linearGradient id="eg" x1="0" y1="0" x2="1" y2="0"><stop offset="0" stop-color="#2aa8e0" /><stop offset=".6" stop-color="#35c3c0" /><stop offset="1" stop-color="#6adf55" /></linearGradient></defs><circle cx="15" cy="15" r="15" fill="#0f6fc6" /><path d="M1 11C4 2 13-1 20 1c8 2 11 9 10 13-1 5-7 7-11 5-2-1-.5-2-.5-4 0-4-4-6-8-6-4 0-7 1-9.500 2z" fill="url(#eg)" /><path d="M11 13c-5 6 0 16 9 16 3-.5 7-3 8-6-7 3-17 1-14-8z" fill="#114f9e" /><path d="M30 18c-3 3-8 4-11 2-3-1-4-4-3-6 1-1 2-1 3 0-1 2 0 4 2 5 3 1 7 0 9-3z" fill="#1d1d1d" /></svg></div>
      <div class="tb t-folder"><svg width="28" height="24" viewBox="0 0 28 24"><path d="M0 1h10l3 3H0z" fill="#dc9b10" /><path d="M0 4h13l2-2h13v20H0z" fill="#ffd35c" /><path d="M5 13c0-1 1-2 2-2h14c1 0 2 1 2 2v10h-4v-5H9v5H5z" fill="#3b94dc" /></svg></div>
      <div class="tb t-word"><svg width="29" height="28" viewBox="0 0 29 28"><path d="M7 0h22v7H7z" fill="#41a5ee" /><path d="M7 7h22v7H7z" fill="#2b7cd3" /><path d="M7 14h22v7H7z" fill="#185abd" /><path d="M7 21h22v7H7z" fill="#103f91" /><rect y="6" width="15" height="16" rx="1" fill="#185abd" /><text x="7.500" y="18" font-size="12" font-weight="800" fill="#fff" text-anchor="middle">W</text></svg></div>
      <div class="tb t-paint"><Palette /></div>
      <div class="row tray">
        <svg width="17" height="10" viewBox="0 0 17 10" fill="none" stroke="#fff" stroke-width="1.400"><path d="M1 9l7.500-8L16 9" /></svg>
        <svg width="15" height="19" viewBox="0 0 15 19" fill="none" stroke="#fff" stroke-width="1.400"><path d="M1 5h8.500v9H1zM10 8l4-2v7l-4-2M2.500 2.500C4 0 8 0 9.500 1.500M2.500 16.500c2 2 5.500 2 7 .5" /></svg>
        <svg width="20" height="14" viewBox="0 0 20 14" fill="none" stroke="#fff" stroke-width="1.200"><path d="M5 3.500h13v9H5z" /><path d="M7 5h8v6H7zM18.500 6H20v4h-1.500z" fill="#fff" stroke="none" /><path d="M1 0v3h4V0M3 3v4" /></svg>
        <svg width="17" height="16" viewBox="0 0 17 16" fill="none" stroke="#eee" stroke-width="1.300"><path d="M.7 15C1 7 7 1 15 1M4.500 15C5 9 9 5 15 5M8.500 15c0-3.500 3-6 6.500-6" /><circle cx="13.500" cy="14" r="1.500" fill="#fff" stroke="none" /></svg>
        <svg width="19" height="12" viewBox="0 0 19 12" fill="none" stroke="#fff" stroke-width="1.200"><path d="M.7 3.500h3L7.500.5v11l-3.800-3h-3zM11 2.500l7 7M18 2.500l-7 7" /></svg>
        <span v-fit="26">РУС</span>
        <div class="clock"><span v-fit="34">11:32</span><span v-fit="70">07.04.2023</span></div>
        <svg width="20" height="20" viewBox="0 0 20 20" fill="none" stroke="#fff" stroke-width="1.300"><path d="M.7.700h18.600V17H13l-3 2.500L7 17H.7z" /></svg>
        <i class="peek" />
      </div>
    </footer>
  </div>
</template>

<style>
body { margin: 0; background: #000; overflow: hidden; }
</style>

<style scoped>
.desktop { position: relative; width: 1920px; height: 1200px; background: #000; overflow: hidden; font: 14px/18px "Noto Sans", "Open Sans", sans-serif; }
.desktop * { box-sizing: border-box; }
svg { display: block; flex: none; overflow: visible; }
.serif { font-family: "Liberation Serif", serif; }
span { white-space: pre; justify-self: start; }
.row { display: grid; align-items: center; justify-items: start; }
.row > span, .row > i, .row > b { display: block; }
.up { transform: rotate(180deg); }
.left { transform: rotate(90deg); }
.right { transform: rotate(-90deg); }
.bar { display: block; width: 1px; height: 20px; background: #888; }
.bar.dim { background: #666; }
section { position: absolute; overflow: hidden; }

.shortcuts { position: absolute; left: 0; top: 0; width: 93px; color: #fff; padding-top: 9px; }
.shortcut { display: flex; flex-direction: column; align-items: center; }
.shortcut.second { margin-top: 41px; }
.sc-label { font-size: 14px; line-height: 20px; }
.sc-label.bin { margin-top: 6px; }
.sc-label.first { margin-top: 2px; }

/* browser */
.edge { left: 92px; top: 0; width: 868px; height: 575px; background: #3b3b3b; border-top: 1px solid #555; border-right: 2px solid #222; color: #fff; }
.e-tabs { height: 50px; padding: 10px 0 0 22px; background: #2d2d2d; grid-template-columns: 38px 313px 343px 57px 58px auto; }
.e-tabs > svg:nth-child(n + 4) { margin-bottom: 11px; }
.e-tab { width: 300px; height: 40px; background: #3b3b3b; border-radius: 6px 6px 0 0; padding-left: 14px; grid-template-columns: 32px 228px auto; color: #c8c8c8; }
.newtab { margin-top: 0; }
.e-addr { height: 49px; border-bottom: 1px solid #6a6a6a; padding-left: 26px; grid-template-columns: 55px 45px 406px 40px 20px 55px 54px 63px 50px auto; }
.e-pill { width: 380px; height: 38px; border-radius: 19px; background: #2b2b2b; padding-left: 22px; font-size: 16px; grid-template-columns: 31px 54px 18px 172px 44px auto; }
.e-pdf { display: flex; height: 475px; }
.e-pdf-main { width: 848px; }
.e-tools { height: 51px; border-bottom: 1px solid #555; padding-left: 18px; grid-template-columns: 38px 17px 40px 38px 109px 43px 44px 37px 9px 62px 43px 18px 38px 19px 137px 37px 20px 45px auto; }
.grey { color: #aaa; }
.pagebox { width: 50px; height: 40px; border: 1px solid #888; border-radius: 3px; font-size: 14px; line-height: 38px; text-align: center; }
.e-view { background: #333; height: 424px; padding-left: 41px; }
.e-page { background: #fff; height: 424px; }
.e-scroll { width: 18px; height: 475px; background: #f0f0f0; display: flex; flex-direction: column; align-items: center; padding-top: 9px; }
.e-thumb { width: 18px; height: 27px; background: #b4b4b4; margin: 377px 0 43px; }

/* explorer */
.explorer { left: 0; top: 575px; width: 960px; height: 575px; background: #191919; color: #fff; border-left: 1px solid #333; border-right: 2px solid #161616; border-top: 1px solid #222; font-size: 12.500px; }
.x-qat { height: 38px; background: #2b2b2b; padding-left: 11px; grid-template-columns: 23px 16px 26px 25px 19px auto; }
.x-bar { width: 3px; height: 18px; border: 1px solid #666; }
.x-tabs { display: flex; height: 28px; line-height: 28px; }
.x-file { width: 70px; background: #545250; padding-left: 20px; }
.x-home { width: 81px; background: #202020; padding-left: 17px; }
.x-rest { flex: 1; background: #000; padding-left: 18px; border-left: 1px solid #333; display: flex; justify-content: space-between; align-items: center; }
.x-help { width: 20px; height: 20px; margin-right: 2px; border-radius: 50%; background: #0067c0; }
.x-ribbon { height: 113px; background: #202020; border-bottom: 1px solid #333; }
.x-cmds { display: flex; height: 94px; }
.x-pin { width: 143px; display: flex; flex-direction: column; align-items: center; padding-top: 15px; color: #bbb; line-height: 17px; }
.pin-big { width: 24px; height: 24px; color: #75736f; margin-bottom: 13px; }
.x-copy { width: 73px; margin-left: -4px; display: flex; flex-direction: column; align-items: center; padding-top: 9px; line-height: 17px; }
.x-copy svg { margin-bottom: 7px; }
.x-group { display: block; color: #bbb; margin-left: 108px; line-height: 17px; }
.x-nav { height: 50px; padding-left: 15px; grid-template-columns: 39px 33px 24px 23px auto; }
.x-path { width: 820px; height: 39px; border: 1px solid #555; padding-left: 5px; grid-template-columns: 24px 19px auto; font-size: 14px; color: #ddd; }
.x-body { display: flex; height: 315px; font-size: 14px; }
.x-tree { width: 180px; padding-top: 2px; }
.x-item { height: 30px; padding-left: 43px; grid-template-columns: 22px 97px auto; }
.x-item > svg:first-child { justify-self: center; margin-left: -10px; }
.x-item.pc { margin-top: 10px; padding-left: 33px; }
.x-item.pc > svg:first-child { margin-left: -6px; }
.pin-small { width: 13px; height: 13px; color: #9aa6b0; }
.x-vscroll { width: 20px; background: #171717; display: flex; flex-direction: column; align-items: center; padding: 9px 0 6px; color: #888; }
.x-vscroll i { width: 19px; height: 130px; background: #4d4d4d; margin: 75px 0 auto; flex: none; }
.x-files { flex: 1; border-left: 5px solid #202020; display: flex; flex-direction: column; justify-content: space-between; }
.x-sizes { display: flex; flex-direction: column; align-items: flex-end; padding-top: 43px; color: #bbb; line-height: 26px; }
.x-sizes span { width: 10px; height: 26px; margin-bottom: 1px; }
.x-sizes .sel { background: #333; }
.x-hscroll { height: 20px; background: #171717; padding-left: 7px; color: #888; grid-template-columns: 15px 716px auto; }
.x-hscroll i { width: 682px; height: 19px; background: #4d4d4d; }
.x-status { height: 30px; background: #333; padding-left: 17px; color: #ccc; grid-template-columns: 103px 13px 193px 571px 33px auto; font-size: 13.500px; }
.x-status > i { width: 1px; height: 13px; background: #fff; }
.x-view { width: 28px; height: 29px; background: #666; border: 1px solid #888; display: grid; place-items: center; }

/* paint */
.paint { left: 207px; top: 144px; width: 742px; height: 952px; border: 1px solid #888; background: #fff; font-size: 12.500px; color: #444; box-shadow: 0 4px 14px rgba(0, 0, 0, .45); }
.p-title { height: 37px; padding-left: 8px; grid-template-columns: 26px 15px 26px 26px 27px 19px 9px 431px 58px 58px auto; }
.p-title > span { color: #999; font-size: 14px; }
.pal-small { width: 20px; height: 20px; }
.p-title .bar { height: 16px; }
.dark { color: #111; }
.p-tabs { display: flex; height: 28px; line-height: 28px; border-bottom: 1px solid #dadbdc; }
.p-file { width: 70px; background: #1979ca; color: #fff; padding-left: 20px; }
.p-home { width: 82px; height: 28px; background: #f5f6f7; border: 1px solid #dadbdc; border-bottom: 0; padding-left: 16px; line-height: 28px; }
.p-rest { flex: 1; padding-left: 18px; grid-template-columns: 525px 22px auto; }
.wide { width: 13px; height: 10px; }
.p-rest .wide { color: #999; }
.p-rest b { width: 20px; height: 20px; border-radius: 50%; background: #0b64c0; color: #fff; line-height: 19px; text-align: center; font-size: 14px; }
.p-ribbon { display: flex; height: 114px; background: #f5f6f7; border-bottom: 1px solid #dadbdc; padding: 3px 0 2px 5px; }
.p-group { height: 108px; display: flex; flex-direction: column; align-items: center; line-height: 17px; border: 1px solid transparent; padding-top: 4px; flex: none; }
.p-group.boxed { border-color: #c0dcf3; background: #edf2f6; }
.p-box { width: 38px; height: 38px; border: 1px solid #a0cef5; background: #f5f9fd; display: grid; place-items: center; margin-bottom: 6px; flex: none; padding-bottom: 5px; }
.p-group > svg:last-child, .p-brush > svg { margin-top: 5px; color: #222; }
.inl { display: flex; align-items: center; gap: 4px; }
.inl svg { margin-top: -4px; color: #222; }
.g1 { width: 61px; margin-right: 2px; }
.g2 { width: 89px; margin-right: 2px; }
.g3 { width: 84px; margin-right: 4px; }
.p-brush { width: 50px; height: 80px; margin: 2px 6px 0 0; border: 1px solid #62a2e4; background: #cde3f9; display: flex; flex-direction: column; align-items: center; line-height: 17px; flex: none; }
.p-brush-img { width: 48px; height: 45px; border-bottom: 1px solid #62a2e4; display: grid; place-items: center; margin-bottom: 1px; }
.p-sep { width: 1px; height: 108px; background: #e2e3e4; flex: none; }
.g5 { width: 50px; margin: 0 6px 0 2px; }
.g6 { width: 54px; margin-right: 10px; }
.g6 > svg:first-child { margin-bottom: 9px; margin-top: 2px; }
.g7 { width: 50px; margin: 0 7px 0 2px; }
.g8 { width: 113px; margin-right: 10px; }
.rainbow { width: 17px; height: 17px; border: 1px solid #888; background: linear-gradient(90deg, #e33, #fb0, #3c3, #0bd, #24d, #a2c, #e36); }
.p3d { background: #fff; border: 1px solid #bbb; box-shadow: 1px 1px 1px #999; }
.drop { width: 21px; height: 21px; border-radius: 50% 50% 50% 0; background: linear-gradient(160deg, #28c6ea, #6a77e8 40%, #d4449c 65%, #f2a33c); transform: rotate(-45deg); }
.p-work { display: flex; height: 718px; }
.p-canvas-area { width: 719px; background: #c8d1e3; padding-top: 5px; flex: none; }
.p-canvas { position: relative; width: 713px; height: 713px; background: #fff; overflow: visible; }
.p-canvas > svg { overflow: hidden; }
.ink path { fill: none; stroke: #000; stroke-width: 9; stroke-linecap: round; stroke-linejoin: round; }
.p-handle { position: absolute; left: 713px; top: 358px; width: 5px; height: 5px; border: 1px solid #555; background: #fff; }
.p-vscroll { width: 21px; border-left: 1px solid #fff; background: #f0f0f0; display: flex; flex-direction: column; align-items: center; padding: 7px 0 0; color: #555; }
.p-vscroll i { width: 19px; height: 664px; background: #cdcdcd; margin: 6px 0 18px; flex: none; }
.p-vscroll svg, .p-hscroll svg { width: 11px; height: 8px; }
.p-hscroll { height: 21px; background: #f0f0f0; border-bottom: 1px solid #d5d5d5; padding-left: 4px; color: #555; grid-template-columns: 275px 424px auto; }
.p-hscroll i { width: 419px; height: 19px; background: #cdcdcd; }
.p-status { height: 32px; background: #f0f0f0; padding-left: 3px; color: #111; font-size: 14px; grid-template-columns: 24px 172px 5px 195px 73px 25px 43px 34px 118px 35px auto; }
.v { width: 1px; height: 29px; background: #d5d5d5; }
.rnd { width: 20px; height: 20px; border: 1px solid #777; border-radius: 50%; background: linear-gradient(#fff, #ddd); font: 700 18px/17px "Noto Sans", sans-serif; text-align: center; color: #555; }
.p-slider { width: 105px; height: 5px; border: 1px solid #d6d6d6; background: #e7eaea; padding-left: 45px; }
.p-slider svg { margin-top: -10px; }
.grip { align-self: end; margin-bottom: 1px; }

/* word */
.word { left: 960px; top: 0; width: 960px; height: 1150px; background: #bebbb8; border-left: 1px solid #444; border-right: 1px solid #444; border-bottom: 1px solid #444; color: #262626; }
.w-title { height: 44px; background: #444; color: #fff; padding-left: 26px; grid-template-columns: 124px 63px 36px 27px 20px 40px 34px 130px 62px 123px 64px 60px 56px 57px auto; }
.toggle { width: 47px; height: 20px; border: 1px solid #fff; border-radius: 10px; padding: 4px; }
.toggle i { display: block; width: 10px; height: 10px; background: #fff; border-radius: 50%; }
.avatar { width: 30px; height: 30px; border-radius: 50%; background: #d13438; font: 400 12.500px/30px "Noto Sans", sans-serif; text-align: center; }
.w-tabs { display: flex; height: 42px; padding-left: 18px; font-size: 16px; line-height: 25px; }
.w-tab { height: 25px; margin-top: 6px; border-left: 1px solid #9c9997; flex: none; }
.w-tab.plain { border-left: 0; }
.w-tab.last { overflow: hidden; color: #000; }
.w-tab.active { font-weight: 700; }
.w-tab.active span { display: inline-block; height: 30px; border-bottom: 4px solid #222; font-size: 15.500px; }
.w-more { width: 16px; height: 38px; border: 1px solid #444; background: #999; display: grid; place-items: center; }
.w-more svg { width: 8px; height: 6px; }
.w-ribbon { display: flex; height: 116px; border-bottom: 1px solid #a5a3a1; position: relative; z-index: 1; background: #bebbb8; box-shadow: 0 2px 6px rgba(0, 0, 0, .3); }
.w-group { height: 110px; margin-top: 1px; border-right: 1px solid #777; display: flex; flex-direction: column; flex: none; }
.w-body { display: flex; height: 95px; flex: none; }
.w-body.col { flex-direction: column; }
.w-body.mid { align-items: center; }
.w-foot { display: flex; align-items: center; justify-content: space-between; height: 18px; font-size: 12.500px; padding-right: 4px; flex: none; }
.w-foot svg { margin-top: -2px; }
.clip { width: 115px; }
.clip .w-foot { padding-left: 3px; }
.w-paste { width: 80px; display: flex; flex-direction: column; align-items: center; padding: 4px 0 0 5px; }
.w-paste > svg:first-child { margin-left: 7px; }
.w-paste span, .mid > span { margin: 4px 0 7px; }
.w-clipicons { display: flex; flex-direction: column; align-items: center; justify-content: space-between; height: 80px; width: 20px; margin-top: 4px; }
.font { width: 279px; padding-left: 10px; }
.w-combos { display: flex; gap: 2px; height: 29px; flex: none; }
.combo { border: 1px solid #888; background: #d0cecc; display: flex; align-items: center; justify-content: space-between; padding: 0 3px; color: #222; }
.c1 { width: 187px; }
.c2 { width: 70px; }
.row.f2, .row.f3, .row.p1, .row.p2, .row.p3 { height: 30px; flex: none; }
.f2 { padding-left: 5px; grid-template-columns: 33px 30px 25px 19px 37px 30px 22px 9px auto; }
.f3 { padding-left: 4px; grid-template-columns: 26px 22px 29px 20px 29px 21px 24px 21px 10px 32px auto; }
.sep { width: 1px; height: 27px; background: #999; }
.gl { font-size: 16px; font-weight: 400; line-height: 20px; }
b.gl { font-weight: 700; }
.ab { letter-spacing: .5px; }
.gl sub, .gl sup { font-size: 8px; color: #2d6cc0; line-height: 0; }
.thin { font-size: 16px; }
.font .w-foot { padding-left: 97px; }
.para { width: 231px; }
.row.p1 { height: 29px; padding-left: 14px; grid-template-columns: 29px 19px 30px 20px 26px 20px 10px 30px auto; }
.p2 { padding-left: 10px; grid-template-columns: 35px 30px 30px 27px 9px 25px auto; }
.sq { width: 28px; height: 29px; border: 1px solid #555; background: #999; display: grid; place-items: center; }
.p3 { padding-left: 14px; grid-template-columns: 29px 16px 51px 9px 28px 12px auto; }
.brd { width: 47px; height: 29px; border: 1px solid #555; background: #999; display: flex; align-items: center; gap: 10px; padding-left: 3px; }
.pil { font: 700 20px/24px "Liberation Serif", serif; }
.para .w-foot { padding-left: 86px; }
.styles { width: 72px; }
.styles .mid { padding-top: 7px; }
.styles .w-foot { padding-left: 8px; }
.edit { width: 135px; }
.find { width: 40px; height: 38px; border: 1px solid #888; background: #d0cecc; display: grid; place-items: center; }
.edit .mid > span { margin: 6px 0 5px; }
.collapse { margin: 102px 0 0 102px; }
.w-doc { height: 919px; background: #666; padding: 0 45px 0 23px; }
.w-page { width: 890px; height: 919px; background: #fff; padding-left: 126px; color: #000; font: 900 20.500px/45px Inter, "Liberation Sans", sans-serif; }
.t1 { width: 702px; height: 57px; border: 1px solid #000; border-top: 0; display: flex; padding-top: 11px; background: linear-gradient(#000, #000) 0 11px / 100% 1px no-repeat; }
.t1a { width: 276px; padding-left: 9px; line-height: 34px; border-right: 1px solid #000; margin-top: -11px; padding-top: 11px; }
.t1b { padding-left: 9px; line-height: 34px; }
.heading { margin: 39px 0 6px 1px; height: 44px; line-height: 44px; }
.t2 { position: relative; width: 702px; border: 1px solid #000; border-top: 0; }
.t2-row { display: flex; border-top: 1px solid #000; }
.t2-left { width: 351px; border-right: 1px solid #000; padding-left: 8px; }
.t2-right { flex: 1; padding-left: 8px; }
.ln { position: relative; height: 45px; line-height: 32px; }
.ln + .ln { line-height: 31px; }
.wave { position: absolute; left: 0; top: 25px; }
.math { display: flex; flex-direction: column; align-items: flex-start; font: 400 22px/24px "Liberation Serif", serif; margin-left: 90px; margin-top: -1px; }
.under { border-bottom: 1.500px solid #000; height: 24px; }
.mover { position: absolute; left: -20px; top: -19px; width: 19px; height: 19px; border: 1px solid #999; background: #fff; display: grid; place-items: center; }
.sizer { position: absolute; right: -19px; bottom: -19px; width: 18px; height: 18px; border: 1px solid #999; background: #fff; }
.w-status { height: 28px; border-top: 1px solid #444; padding: 1px 0 0 10px; font-size: 12.500px; color: #333; grid-template-columns: 134px 120px 40px 157px 21px 109px 34px 66px 41px 16px 130px 28px auto; }
.mode { width: 50px; height: 26px; background: #9d9b99; display: grid; place-items: center; }
.zoomer { width: 125px; height: 13px; background: linear-gradient(#888, #888) 0 6px / 100% 1px no-repeat; display: flex; align-items: center; padding-left: 53px; gap: 3px; }
.zoomer i { width: 6px; height: 13px; background: #777; }
.zoomer b { width: 1px; height: 7px; background: #888; }

/* taskbar */
.taskbar { position: absolute; left: 0; top: 1150px; width: 1920px; height: 50px; background: #1d1d1d; display: flex; color: #fff; }
.tb { width: 51px; height: 50px; display: grid; place-items: center; border-bottom: 3px solid #b5b3af; flex: none; }
.start { width: 60px; border: 0; margin-right: 9px; }
.t-edge { margin-right: 11px; border-image: linear-gradient(90deg, #b5b3af 40px, #888 40px) 3; padding-right: 1px; }
.t-folder { margin-right: 6px; padding-right: 2px; }
.t-word { width: 61px; background: #4b4b4b; margin-right: 6px; padding-right: 1px; }
.t-paint { padding-right: 2px; }
.t-paint svg { width: 31px; height: 30px; }
.tray { margin-left: 1274px; height: 50px; grid-template-columns: 31px 27px 33px 27px 34px 42px 95px 45px auto; }
.clock { display: flex; flex-direction: column; width: 71px; align-items: center; line-height: 24px; }
.peek { width: 1px; height: 50px; background: #777; }
</style>
